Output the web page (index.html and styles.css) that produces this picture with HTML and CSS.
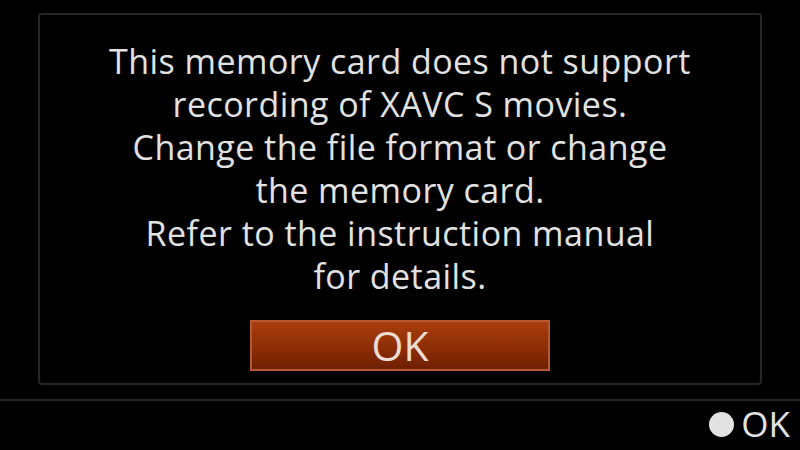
FILE: index.html
```html
<!DOCTYPE html>
<html>
<head>
<meta charset="utf-8">
<link rel="stylesheet" href="styles.css">
</head>
<body>
<div class="screen">
  <div class="panel">
    <div class="message">
      <div>This memory card does not support</div>
      <div>recording of XAVC S movies.</div>
      <div>Change the file format or change</div>
      <div>the memory card.</div>
      <div>Refer to the instruction manual</div>
      <div>for details.</div>
    </div>
    <div class="btn">OK</div>
  </div>
  <div class="footer">
    <span class="dot"></span><span class="ok">OK</span>
  </div>
</div>
</body>
</html>
```
FILE: styles.css
```css
html, body {
  margin: 0;
  padding: 0;
  background: #000;
}
.screen {
  width: 800px;
  height: 450px;
  background: #000;
  display: flex;
  flex-direction: column;
  font-family: "Open Sans", "DejaVu Sans", sans-serif;
  color: #e2e2e2;
  overflow: hidden;
}
.panel {
  margin: 13px 38px 0 38px;
  height: 343px;
  border: 2px solid #262626;
  border-radius: 4px;
  display: flex;
  flex-direction: column;
  align-items: center;
  padding-top: 25px;
  box-sizing: content-box;
  flex: none;
}
.message {
  text-align: center;
  font-size: 34px;
  line-height: 43px;
  letter-spacing: 0.45px;
}
.btn {
  margin-top: 22px;
  width: 296px;
  height: 47px;
  border: 2px solid #b9582e;
  background: linear-gradient(#a93d0e, #8a2c05 60%, #6e2003);
  color: #ecdcd2;
  font-size: 41px;
  line-height: 47px;
  text-align: center;
}
.footer {
  margin-top: 14px;
  border-top: 2px solid #262626;
  flex: 1;
  display: flex;
  align-items: center;
  justify-content: flex-end;
  padding-right: 10px;
  padding-bottom: 4px;
}
.dot {
  width: 25px;
  height: 25px;
  border-radius: 50%;
  background: #e2e2e2;
  margin-right: 7px;
  margin-top: 2px;
}
.ok {
  font-size: 35px;
  line-height: 40px;
}
```
